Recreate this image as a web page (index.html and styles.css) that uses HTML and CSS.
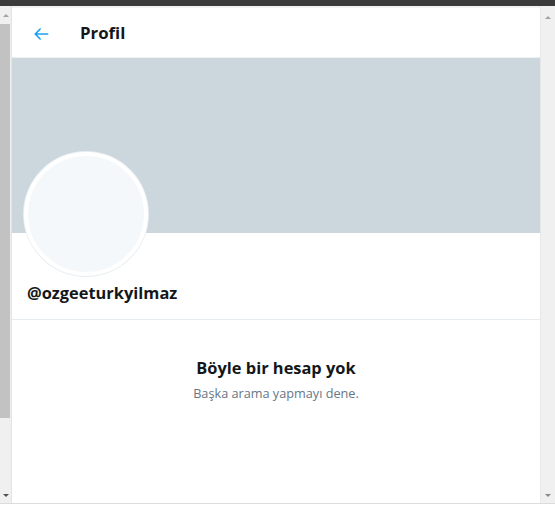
FILE: index.html
```html
<!DOCTYPE html>
<html lang="tr">
<head>
<meta charset="utf-8">
<link rel="stylesheet" href="styles.css">
</head>
<body>
<div class="topbar"></div>
<div class="frame">
  <div class="sb sb-left">
    <span class="arr up"></span>
    <div class="thumb"></div>
    <span class="arr down"></span>
  </div>
  <main class="panel">
    <header class="head">
      <svg class="back" viewBox="0 0 24 24"><path d="M20 11H7.414l4.293-4.293c.39-.39.39-1.023 0-1.414s-1.023-.39-1.414 0l-6 6c-.39.39-.39 1.023 0 1.414l6 6c.195.195.45.293.707.293s.512-.098.707-.293c.39-.39.39-1.023 0-1.414L7.414 13H20c.553 0 1-.447 1-1s-.447-1-1-1z"/></svg>
      <h1 class="title">Profil</h1>
    </header>
    <div class="banner"></div>
    <div class="profile">
      <div class="avatar"></div>
      <div class="handle">@ozgeeturkyilmaz</div>
    </div>
    <section class="empty">
      <h2 class="empty-title">Böyle bir hesap yok</h2>
      <p class="empty-sub">Başka arama yapmayı dene.</p>
    </section>
  </main>
  <div class="sb sb-right">
    <span class="arr up"></span>
    <div class="track"></div>
    <span class="arr down"></span>
  </div>
</div>
<div class="bottomline"></div>
</body>
</html>
```
FILE: styles.css
```css
html, body {
  margin: 0;
  padding: 0;
  width: 555px;
  height: 507px;
  overflow: hidden;
  background: #ffffff;
  font-family: "Open Sans", "Noto Sans", Arial, sans-serif;
}
.topbar {
  height: 6px;
  background: #3b3b3b;
}
.frame {
  display: flex;
  height: 497px;
}
.sb {
  display: flex;
  flex-direction: column;
  align-items: center;
  background: #f0f0f0;
}
.sb-left {
  width: 11px;
  border-right: 1px solid #e3e3e3;
}
.sb-right {
  width: 14px;
  border-left: 1px solid #e8e8e8;
}
.arr {
  width: 0;
  height: 0;
  border-left: 3px solid transparent;
  border-right: 3px solid transparent;
}
.arr.up {
  border-bottom: 3px solid #a3a3a3;
  margin-top: 8px;
}
.arr.down {
  border-top: 3px solid #505050;
  margin-bottom: 6px;
}
.sb-right .arr.up { margin-top: 10px; }
.sb-right .arr.down { border-top-color: #8a8a8a; }
.thumb {
  width: 10px;
  margin: 7px 0 0 -1px;
  height: 394px;
  background: #c2c2c2;
}
.sb-left .arr.down { margin-top: auto; }
.track { flex: 1; }
.panel {
  flex: 1;
  display: flex;
  flex-direction: column;
  background: #ffffff;
  border-top: 2px solid #f2f2f2;
}
.head {
  height: 49px;
  display: flex;
  align-items: center;
  padding-left: 19px;
  border-bottom: 1px solid #eef1f3;
}
.back {
  width: 20px;
  height: 20px;
  fill: #1da1f2;
  margin-top: 2px;
}
.title {
  margin: 0 0 0 29px;
  font-size: 16.8px;
  font-weight: 700;
  color: #14171a;
}
.banner {
  height: 175px;
  background: #ccd6dd;
}
.profile {
  padding: 0 12px;
  border-bottom: 1px solid #e6ecf0;
}
.avatar {
  width: 116px;
  height: 116px;
  margin-top: -81px;
  border: 4px solid #ffffff;
  border-radius: 50%;
  background: #f5f8fa;
  box-shadow: 0 0 0 1px #e8eef2;
}
.handle {
  margin: 5px 0 0 3px;
  height: 38px;
  font-size: 16.4px;
  font-weight: 700;
  color: #14171a;
}
.empty {
  text-align: center;
  padding-top: 36px;
}
.empty-title {
  margin: 0;
  font-size: 16.4px;
  font-weight: 700;
  color: #14171a;
}
.empty-sub {
  margin: 5px 0 0;
  font-size: 12.7px;
  color: #657786;
}
.bottomline {
  height: 1px;
  background: #dcdcdc;
}
```
